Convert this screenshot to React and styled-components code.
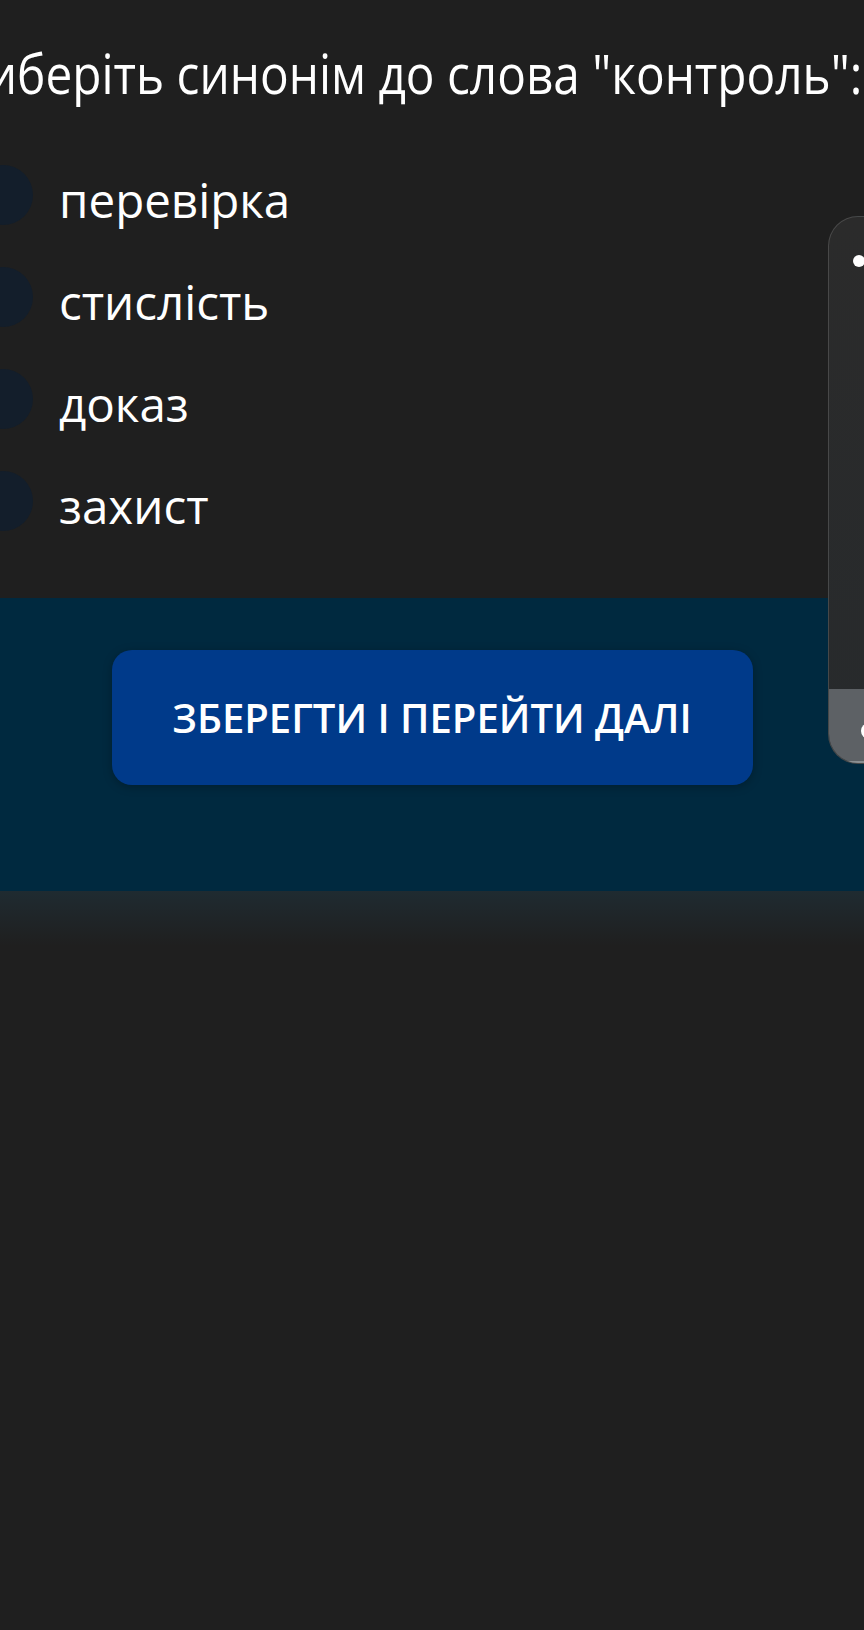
import React from 'react';
import styled, { createGlobalStyle } from 'styled-components';

const GlobalStyle = createGlobalStyle`
  html, body {
    margin: 0;
    padding: 0;
    background: #1f1f1f;
  }
  body {
    font-family: "Open Sans", "Noto Sans", sans-serif;
    overflow: hidden;
  }
`;

const Page = styled.div`
  position: relative;
  width: 864px;
  height: 1630px;
  overflow: hidden;
  background: #1f1f1f;
  display: flex;
  flex-direction: column;
`;

const Question = styled.section`
  padding: 45px 46px 0 0;
  display: flex;
  justify-content: center;
`;

const Title = styled.h1`
  margin: 0;
  font-size: 55px;
  font-weight: 400;
  line-height: 1;
  color: #fff;
  white-space: nowrap;
  transform: scaleX(0.868);
`;

const Options = styled.ul`
  list-style: none;
  margin: 65px 0 0;
  padding: 0;
  display: flex;
  flex-direction: column;
  gap: 37px;
`;

const Option = styled.li`
  display: flex;
  align-items: flex-start;
  gap: 26px;
  height: 65px;
`;

const Radio = styled.span`
  flex: none;
  width: 60px;
  height: 60px;
  margin-left: -27px;
  border-radius: 50%;
  background: ${p => (p.checked ? '#1d4f9c' : '#131e2b')};
`;

const Label = styled.span`
  padding-top: 5px;
  font-size: 47.5px;
  line-height: 60px;
  color: #fff;
`;

const Footer = styled.div`
  margin-top: 62px;
  height: 293px;
  box-sizing: border-box;
  padding-top: 52px;
  background: #00293f;
  display: flex;
  justify-content: center;
  align-items: flex-start;
`;

const NextButton = styled.button`
  width: 641px;
  height: 135px;
  border: none;
  border-radius: 20px;
  background: #003a8a;
  color: #fff;
  font-family: inherit;
  font-size: 40px;
  font-weight: 600;
  box-shadow: 0 2px 10px rgba(0, 0, 0, 0.25);
  cursor: pointer;
`;

const Fade = styled.div`
  height: 55px;
  background: linear-gradient(#1f2b31, #1f1f1f);
`;

const SidePanel = styled.div`
  position: absolute;
  top: 216px;
  left: 828px;
  width: 80px;
  height: 548px;
  box-sizing: border-box;
  border-radius: 30px;
  border: 1.5px solid rgba(255, 255, 255, 0.14);
  background: linear-gradient(#2b2b2b, #272a2c);
  overflow: hidden;
  display: flex;
  flex-direction: column;
`;

const PanelBody = styled.div`
  flex: 1;
  padding: 38px 0 0 24px;
`;

const Dot = styled.span`
  display: block;
  width: 12px;
  height: 12px;
  border-radius: 50%;
  background: #fff;
`;

const PanelFoot = styled.div`
  height: 74px;
  background: #5d6165;
  border-bottom: 2px solid #8a8e91;
  padding: 34px 0 0 32px;
  box-sizing: border-box;
`;

const FootDot = styled.span`
  display: block;
  width: 16px;
  height: 16px;
  border-radius: 50%;
  background: #fff;
`;

const answers = ['перевірка', 'стислість', 'доказ', 'захист'];

export default function App() {
  return (
    <>
      <GlobalStyle />
      <Page>
        <Question>
          <Title>Виберіть синонім до слова "контроль":</Title>
        </Question>
        <Options>
          {answers.map(a => (
            <Option key={a}>
              <Radio />
              <Label>{a}</Label>
            </Option>
          ))}
        </Options>
        <Footer>
          <NextButton>ЗБЕРЕГТИ І ПЕРЕЙТИ ДАЛІ</NextButton>
        </Footer>
        <Fade />
        <SidePanel>
          <PanelBody>
            <Dot />
          </PanelBody>
          <PanelFoot>
            <FootDot />
          </PanelFoot>
        </SidePanel>
      </Page>
    </>
  );
}
